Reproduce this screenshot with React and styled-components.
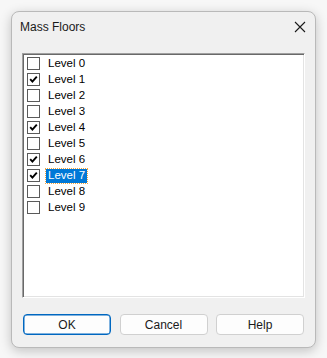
import React from 'react';
import styled, { createGlobalStyle } from 'styled-components';

const GlobalStyle = createGlobalStyle`
  body {
    margin: 0;
    background: #f7f7f7;
    font-family: "Liberation Sans", Arial, sans-serif;
  }
`;

const Page = styled.div`
  padding: 11px;
  height: 358px;
  box-sizing: border-box;
`;

const Window = styled.div`
  width: 305px;
  height: 337px;
  box-sizing: border-box;
  background: #f0f0f0;
  border: 1px solid #b9b9b9;
  border-radius: 8px;
  box-shadow: 0 3px 12px rgba(0, 0, 0, 0.22);
  display: flex;
  flex-direction: column;
`;

const TitleBar = styled.div`
  height: 30px;
  display: flex;
  align-items: center;
  justify-content: space-between;
  padding: 0 9px 0 8px;
`;

const Title = styled.span`
  font-size: 12px;
  color: #1a1a1a;
`;

const Close = styled.span`
  display: flex;
  width: 12px;
  height: 12px;
`;

const Body = styled.div`
  padding: 11px 10px 0 10px;
  display: flex;
  flex-direction: column;
`;

const ListBox = styled.div`
  height: 245px;
  box-sizing: border-box;
  background: #fff;
  border-top: 1px solid #a0a0a0;
  border-left: 1px solid #a0a0a0;
  border-right: 1px solid #fff;
  border-bottom: 1px solid #fff;
  box-shadow: inset 1px 1px 0 #696969, inset -1px -1px 0 #e3e3e3;
  padding: 1px 2px;
`;

const Row = styled.div`
  height: 16px;
  display: flex;
  align-items: center;
  padding-left: 2px;
`;

const Box = styled.span`
  width: 11px;
  height: 11px;
  border: 1px solid #5a5a5a;
  background: #fff;
  display: flex;
  align-items: center;
  justify-content: center;
  margin-right: 6px;
`;

const Label = styled.span`
  font-size: 11.5px;
  line-height: 13px;
  padding: 0 2px;
  color: ${p => (p.$selected ? '#fff' : '#000')};
  background: ${p => (p.$selected ? '#0078d7' : 'transparent')};
  outline: ${p => (p.$selected ? '1px dotted #f2a33a' : 'none')};
  outline-offset: 0;
  margin-top: ${p => (p.$selected ? '2px' : '0')};
  height: 13px;
  padding-bottom: ${p => (p.$selected ? '1px' : '0')};
`;

const Buttons = styled.div`
  display: flex;
  gap: 8.5px;
  margin-top: 16px;
  padding-left: 1px;
`;

const Button = styled.button`
  width: 88px;
  height: 21px;
  box-sizing: border-box;
  font-family: "Liberation Sans", Arial, sans-serif;
  font-size: 12px;
  color: #1a1a1a;
  background: #fdfdfd;
  border: 1px solid ${p => (p.$primary ? '#0067c0' : '#d0d0d0')};
  box-shadow: ${p => (p.$primary ? 'inset 0 0 0 0.5px #0067c0' : 'none')};
  border-radius: 4px;
  padding: 0;
`;

const levels = [0, 1, 2, 3, 4, 5, 6, 7, 8, 9];
const checked = [1, 4, 6, 7];

const Check = () => (
  <svg width="9" height="9" viewBox="0 0 9 9">
    <path d="M1.2 4.2 L3.4 6.6 L7.8 1.6" fill="none" stroke="#000" strokeWidth="1.9" />
  </svg>
);

export default function App() {
  return (
    <>
      <GlobalStyle />
      <Page>
        <Window>
          <TitleBar>
            <Title>Mass Floors</Title>
            <Close>
              <svg width="12" height="12" viewBox="0 0 12 12">
                <path d="M1 1 L11 11 M11 1 L1 11" stroke="#1a1a1a" strokeWidth="1.1" />
              </svg>
            </Close>
          </TitleBar>
          <Body>
            <ListBox>
              {levels.map(n => (
                <Row key={n}>
                  <Box>{checked.includes(n) && <Check />}</Box>
                  <Label $selected={n === 7}>Level {n}</Label>
                </Row>
              ))}
            </ListBox>
            <Buttons>
              <Button $primary>OK</Button>
              <Button>Cancel</Button>
              <Button>Help</Button>
            </Buttons>
          </Body>
        </Window>
      </Page>
    </>
  );
}
